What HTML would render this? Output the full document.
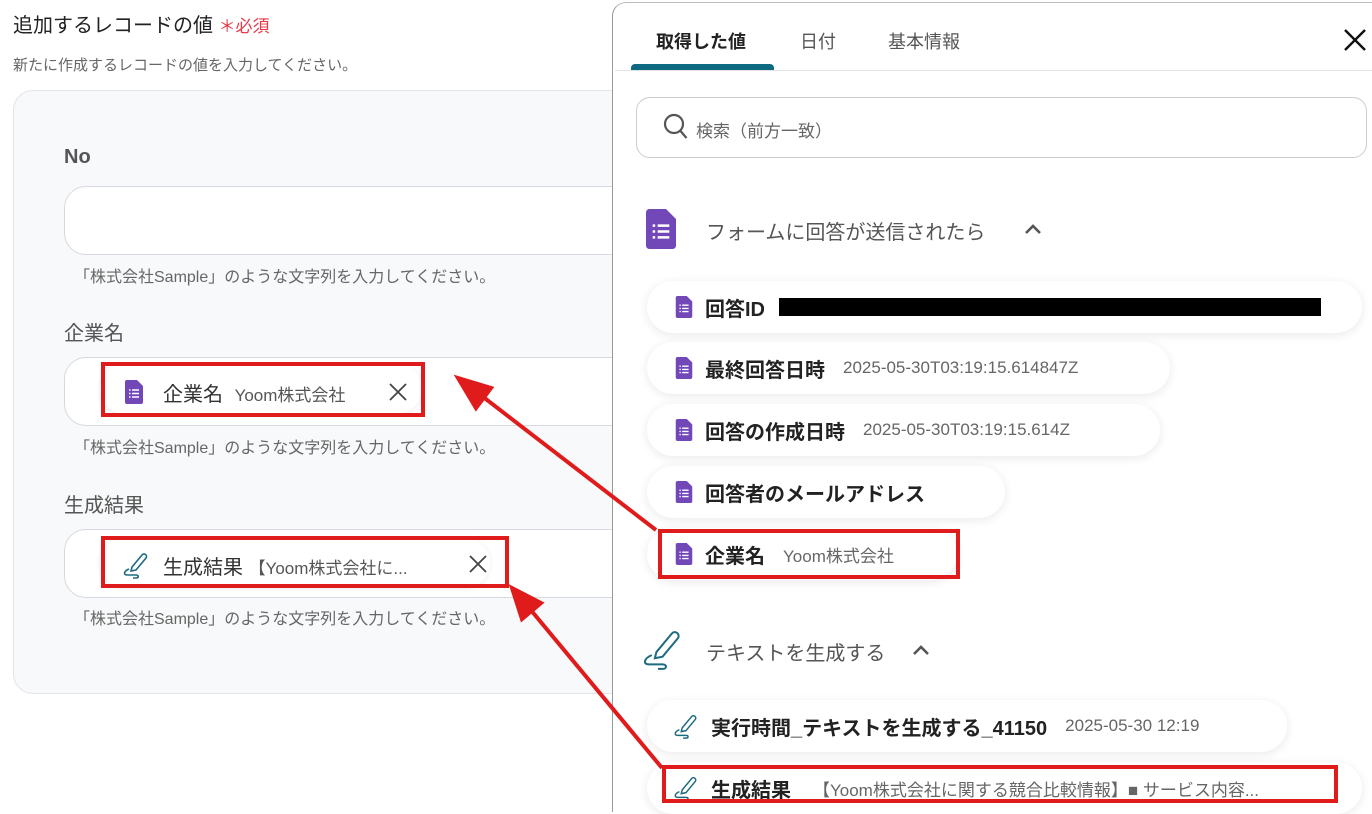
<!DOCTYPE html>
<html><head><meta charset="utf-8"><style>
*{box-sizing:border-box;margin:0;padding:0}
body{width:1372px;height:804px;overflow:hidden;background:#fff;font-family:"Liberation Sans","Noto Sans CJK JP",sans-serif;position:relative;color:#222}
.a{position:absolute;white-space:nowrap}
.card{left:13px;top:90px;width:640px;height:604px;background:#f8f9fa;border:1px solid #e2e4e8;border-radius:20px}
.inp{left:64px;width:600px;height:69px;background:#fff;border:1px solid #d6d9de;border-radius:22px}
.lbl{font-size:20px;color:#555;left:64px}
.hint{font-size:16px;color:#666;left:74px}
.chip{background:#fff;border-radius:30px;box-shadow:0 1px 6px rgba(0,0,0,.08)}
.panel{left:612px;top:2px;width:770px;height:810px;background:#fff;border-left:1px solid #999;border-top:1px solid #bbb;border-top-left-radius:14px}
.pill{position:absolute;left:647px;height:52px;background:#fff;border-radius:26px;box-shadow:0 2px 10px rgba(0,0,0,.09);display:flex;align-items:center;padding-left:28px;font-size:20px;font-weight:bold;color:#222}
.pill .v{font-weight:normal;font-size:17px;color:#666;margin-left:18px}
.pill svg{margin-right:12px}
.red{position:absolute;border:4px solid #e01b1b}
</style></head><body>
<div class="a" style="left:13px;top:9px;font-size:20px;color:#222">追加するレコードの値 <span style="color:#e8394a;font-size:17px">＊必須</span></div>
<div class="a" style="left:13px;top:54px;font-size:15px;color:#666">新たに作成するレコードの値を入力してください。</div>
<div class="a card"></div>
<div class="a lbl" style="top:146px;font-weight:bold">No</div>
<div class="a inp" style="top:186px"></div>
<div class="a hint" style="top:263px">「株式会社Sample」のような文字列を入力してください。</div>
<div class="a lbl" style="top:317px">企業名</div>
<div class="a inp" style="top:357px"></div>
<div class="a chip" style="left:100px;top:364px;width:322px;height:50px"></div>
<svg class="a" style="left:125px;top:380px" width="18" height="24" viewBox="0 0 18 24"><path d="M0 2a2 2 0 0 1 2-2h10l6 6v16a2 2 0 0 1-2 2H2a2 2 0 0 1-2-2z" fill="#7248b9"/><path d="M4 10h1.5M4 13.5h1.5M4 17h1.5M7 10h7M7 13.5h7M7 17h7" stroke="#fff" stroke-width="1.5"/></svg>
<div class="a" style="left:163px;top:378px;font-size:20px;color:#333">企業名 <span style="font-size:17px;color:#555;margin-left:6px">Yoom株式会社</span></div>
<svg class="a" style="left:389px;top:383px" width="18" height="18" stroke="#444" stroke-width="1.8"><path d="M1 1L17 17M17 1L1 17"/></svg>
<div class="a hint" style="top:434px">「株式会社Sample」のような文字列を入力してください。</div>
<div class="a lbl" style="top:489px">生成結果</div>
<div class="a inp" style="top:529px"></div>
<div class="a chip" style="left:100px;top:538px;width:390px;height:50px"></div>
<svg class="a" style="left:120px;top:550px" width="30" height="30" viewBox="0 0 30 30" fill="none" stroke="#1d6b80" stroke-width="1.6"><path d="M12 17l10-12a2.5 2.5 0 0 1 4 3L16 20l-5 1z"/><path d="M9 19c-5 2-6 6-2 6h9c3 0 3 3 0 3h-3"/></svg>
<div class="a" style="left:163px;top:551px;font-size:20px;color:#333">生成結果 <span style="font-size:17px;color:#555">【Yoom株式会社に...</span></div>
<svg class="a" style="left:469px;top:555px" width="18" height="18" stroke="#444" stroke-width="1.8"><path d="M1 1L17 17M17 1L1 17"/></svg>
<div class="a hint" style="top:605px">「株式会社Sample」のような文字列を入力してください。</div>

<div class="a panel"></div>
<div class="a" style="left:656px;top:28px;font-size:18px;font-weight:bold;color:#222">取得した値</div>
<div class="a" style="left:800px;top:28px;font-size:18px;color:#555">日付</div>
<div class="a" style="left:888px;top:28px;font-size:18px;color:#555">基本情報</div>
<svg class="a" style="left:1344px;top:29px" width="22" height="22" stroke="#111" stroke-width="2.4"><path d="M1 1L21 21M21 1L1 21"/></svg>
<div class="a" style="left:631px;top:64px;width:143px;height:6px;background:#0e6a80;border-radius:4px 4px 0 0"></div>
<div class="a" style="left:615px;top:70px;width:757px;height:1px;background:#e3e3e3"></div>
<div class="a" style="left:636px;top:97px;width:731px;height:61px;border:1px solid #ccc;border-radius:14px"></div>
<svg class="a" style="left:663px;top:113px" width="26" height="28" viewBox="0 0 26 28" fill="none" stroke="#555" stroke-width="2.2"><circle cx="11" cy="11" r="9"/><path d="M17.5 18l6 7"/></svg>
<div class="a" style="left:696px;top:117px;font-size:17px;color:#666">検索（前方一致）</div>
<svg class="a" style="left:646px;top:209px" width="30" height="40" viewBox="0 0 18 24"><path d="M0 2a2 2 0 0 1 2-2h10l6 6v16a2 2 0 0 1-2 2H2a2 2 0 0 1-2-2z" fill="#7248b9"/><path d="M4 10h1.5M4 13.5h1.5M4 17h1.5M7 10h7M7 13.5h7M7 17h7" stroke="#fff" stroke-width="1.5"/></svg>
<div class="a" style="left:706px;top:216px;font-size:20px;color:#555">フォームに回答が送信されたら</div>
<svg class="a" style="left:1024px;top:223px" width="18" height="12" fill="none" stroke="#555" stroke-width="2.6"><path d="M2 10L9 3L16 10"/></svg>

<div class="pill" style="top:281px;width:715px"><svg width="18" height="22" viewBox="0 0 18 24"><path d="M0 2a2 2 0 0 1 2-2h10l6 6v16a2 2 0 0 1-2 2H2a2 2 0 0 1-2-2z" fill="#7248b9"/><path d="M4 10h1.5M4 13.5h1.5M4 17h1.5M7 10h7M7 13.5h7M7 17h7" stroke="#fff" stroke-width="1.5"/></svg>回答ID<span style="display:inline-block;width:542px;height:18px;background:#000;margin-left:14px"></span></div>
<div class="pill" style="top:342px;width:523px"><svg width="18" height="22" viewBox="0 0 18 24"><path d="M0 2a2 2 0 0 1 2-2h10l6 6v16a2 2 0 0 1-2 2H2a2 2 0 0 1-2-2z" fill="#7248b9"/><path d="M4 10h1.5M4 13.5h1.5M4 17h1.5M7 10h7M7 13.5h7M7 17h7" stroke="#fff" stroke-width="1.5"/></svg>最終回答日時<span class="v">2025-05-30T03:19:15.614847Z</span></div>
<div class="pill" style="top:404px;width:513px"><svg width="18" height="22" viewBox="0 0 18 24"><path d="M0 2a2 2 0 0 1 2-2h10l6 6v16a2 2 0 0 1-2 2H2a2 2 0 0 1-2-2z" fill="#7248b9"/><path d="M4 10h1.5M4 13.5h1.5M4 17h1.5M7 10h7M7 13.5h7M7 17h7" stroke="#fff" stroke-width="1.5"/></svg>回答の作成日時<span class="v">2025-05-30T03:19:15.614Z</span></div>
<div class="pill" style="top:466px;width:358px"><svg width="18" height="22" viewBox="0 0 18 24"><path d="M0 2a2 2 0 0 1 2-2h10l6 6v16a2 2 0 0 1-2 2H2a2 2 0 0 1-2-2z" fill="#7248b9"/><path d="M4 10h1.5M4 13.5h1.5M4 17h1.5M7 10h7M7 13.5h7M7 17h7" stroke="#fff" stroke-width="1.5"/></svg>回答者のメールアドレス</div>
<div class="pill" style="top:528px;width:310px"><svg width="18" height="22" viewBox="0 0 18 24"><path d="M0 2a2 2 0 0 1 2-2h10l6 6v16a2 2 0 0 1-2 2H2a2 2 0 0 1-2-2z" fill="#7248b9"/><path d="M4 10h1.5M4 13.5h1.5M4 17h1.5M7 10h7M7 13.5h7M7 17h7" stroke="#fff" stroke-width="1.5"/></svg>企業名<span class="v">Yoom株式会社</span></div>

<svg class="a" style="left:636px;top:626px" width="50" height="46" viewBox="0 0 30 30" fill="none" stroke="#1d6b80" stroke-width="1.3"><path d="M12 17l10-12a2.5 2.5 0 0 1 4 3L16 20l-5 1z"/><path d="M9 19c-5 2-6 6-2 6h9c3 0 3 3 0 3h-3"/></svg>
<div class="a" style="left:706px;top:637px;font-size:20px;color:#555">テキストを生成する</div>
<svg class="a" style="left:912px;top:644px" width="18" height="12" fill="none" stroke="#555" stroke-width="2.6"><path d="M2 10L9 3L16 10"/></svg>
<div class="pill" style="top:700px;width:640px;padding-left:24px"><svg width="28" height="28" viewBox="0 0 30 30" fill="none" stroke="#1d6b80" stroke-width="1.6"><path d="M12 17l10-12a2.5 2.5 0 0 1 4 3L16 20l-5 1z"/><path d="M9 19c-5 2-6 6-2 6h9c3 0 3 3 0 3h-3"/></svg>実行時間_テキストを生成する_41150<span class="v">2025-05-30 12:19</span></div>
<div class="pill" style="top:762px;width:715px;padding-left:24px"><svg width="28" height="28" viewBox="0 0 30 30" fill="none" stroke="#1d6b80" stroke-width="1.6"><path d="M12 17l10-12a2.5 2.5 0 0 1 4 3L16 20l-5 1z"/><path d="M9 19c-5 2-6 6-2 6h9c3 0 3 3 0 3h-3"/></svg>生成結果<span class="v" style="margin-left:22px">【Yoom株式会社に関する競合比較情報】■ サービス内容...</span></div>

<div class="red" style="left:101px;top:362px;width:324px;height:55px"></div>
<div class="red" style="left:101px;top:536px;width:408px;height:52px"></div>
<div class="red" style="left:658px;top:529px;width:302px;height:50px"></div>
<div class="red" style="left:662px;top:765px;width:676px;height:38px"></div>
<svg class="a" style="left:0;top:0" width="1372" height="804">
<g stroke="#e01b1b" stroke-width="4" fill="#e01b1b"><line x1="656" y1="530" x2="478" y2="393"/><polygon points="458,378 491,388 476,408"/><line x1="662" y1="768" x2="525" y2="603"/><polygon points="512,588 541,603 522,619"/></g></svg>
</body></html>
